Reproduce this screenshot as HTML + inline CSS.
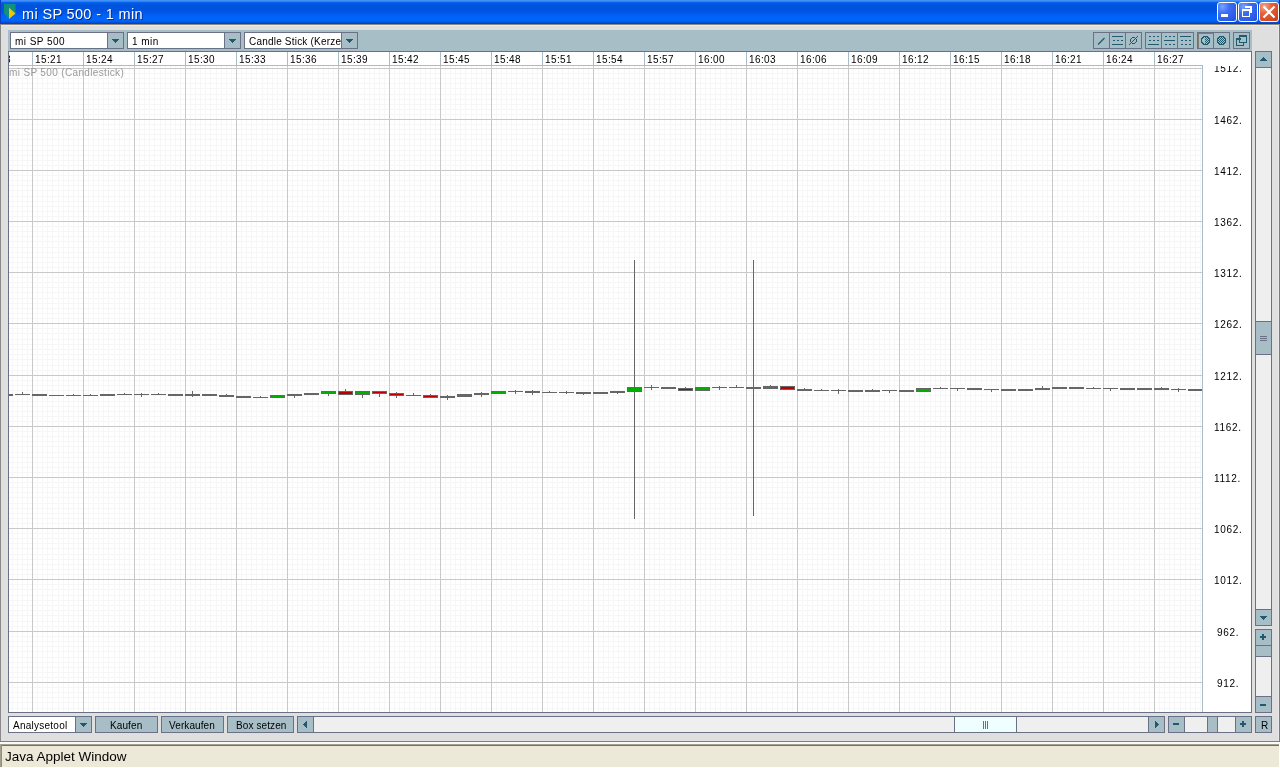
<!DOCTYPE html>
<html><head><meta charset="utf-8"><style>
html,body{margin:0;padding:0;}
body{width:1280px;height:768px;overflow:hidden;position:relative;background:#dfdfdf;font-family:"Liberation Sans",sans-serif;}
body div{position:absolute;}
.t{white-space:nowrap;line-height:0;height:0;}
.t span{display:inline-block;line-height:0;will-change:transform;}
</style></head><body>
<div style="left:0;top:0;width:1280px;height:24px;background:linear-gradient(to bottom,#3b8cf6 0px,#4c97fb 1px,#0d6af5 2px,#005ce6 3px,#0054db 5px,#0053e0 10px,#0058ea 13px,#0063f8 16px,#0066fb 20px,#005ae8 22px,#0044d0 23px,#0040c8 24px);"></div>
<div style="left:0px;top:0px;width:1px;height:24px;background:#0a3fc0;"></div>
<div style="left:1279px;top:0px;width:1px;height:24px;background:#0030b0;"></div>
<svg style="position:absolute;left:4px;top:4px;shape-rendering:auto" width="12" height="15" viewBox="0 0 12 15" shape-rendering="crispEdges"><path d="M0 0H11.5V9.5L5 14.5L0 9.5Z" fill="#14917a"/><path d="M5 3.8L11.5 9.5L5 15Z" fill="#f5c400"/></svg>
<div class="t" style="left:22px;top:14px;font-size:14.5px;color:#fff;letter-spacing:0.35px;text-shadow:1px 1px 0 #0a2a90;"><span>mi SP 500 - 1 min</span></div>
<div style="left:1217px;top:2px;width:20px;height:20px;box-sizing:border-box;border:1px solid #fff;border-radius:3px;background:radial-gradient(circle at 25% 20%,#7aa2ff 0,#3d6cf3 35%,#1f4fe0 100%);"></div>
<svg style="position:absolute;left:1217px;top:2px;" width="20" height="20" viewBox="0 0 20 20" shape-rendering="crispEdges"><rect x="4" y="12" width="7" height="3" fill="#fff"/></svg>
<div style="left:1238px;top:2px;width:20px;height:20px;box-sizing:border-box;border:1px solid #fff;border-radius:3px;background:radial-gradient(circle at 25% 20%,#7aa2ff 0,#3d6cf3 35%,#1f4fe0 100%);"></div>
<svg style="position:absolute;left:1238px;top:2px;" width="20" height="20" viewBox="0 0 20 20" shape-rendering="crispEdges"><rect x="7" y="4" width="7" height="2" fill="#fff"/><rect x="12" y="6" width="2" height="5" fill="#fff"/><rect x="4" y="7" width="8" height="8" fill="none" stroke="#fff" stroke-width="0"/><path d="M4 7h8v8h-8z M5 9h6v5h-6z" fill="#fff" fill-rule="evenodd"/></svg>
<div style="left:1259px;top:2px;width:20px;height:20px;box-sizing:border-box;border:1px solid #fff;border-radius:3px;background:radial-gradient(circle at 25% 20%,#f4a88c 0,#e4633c 35%,#c83a14 100%);"></div>
<svg style="position:absolute;left:1259px;top:2px;" width="20" height="20" viewBox="0 0 20 20" shape-rendering="crispEdges"><path d="M4.5 4.5L15.5 15.5M15.5 4.5L4.5 15.5" stroke="#fff" stroke-width="2.2" fill="none" shape-rendering="auto"/></svg>
<div style="left:0px;top:24px;width:1280px;height:1px;background:#8f8b7c;"></div>
<div style="left:0px;top:25px;width:1280px;height:1px;background:#ececec;"></div>
<div style="left:0px;top:25px;width:1px;height:716px;background:#8a8a8a;"></div>
<div style="left:1278px;top:25px;width:1px;height:716px;background:#e9e9e9;"></div>
<div style="left:1279px;top:25px;width:1px;height:716px;background:#7a7a7a;"></div>
<div style="left:0px;top:741px;width:1280px;height:1px;background:#7f7f7f;"></div>
<div style="left:8px;top:30px;width:1244px;height:21px;background:#a8bec6;"></div>
<div style="left:10px;top:32px;width:114px;height:17px;background:#fff;border:1px solid #6a7186;box-sizing:border-box;"></div>
<div style="left:107px;top:32px;width:17px;height:17px;background:#a8bec6;border:1px solid #6a7186;box-sizing:border-box;"></div>
<svg style="position:absolute;left:112px;top:39px;" width="7" height="4" viewBox="0 0 7 4" shape-rendering="crispEdges"><rect x="0" y="0" width="7" height="1" fill="#1f5a6e"/><rect x="1" y="1" width="5" height="1" fill="#1f5a6e"/><rect x="2" y="2" width="3" height="1" fill="#1f5a6e"/><rect x="3" y="3" width="1" height="1" fill="#1f5a6e"/></svg>
<div style="left:11px;top:33px;width:96px;height:15px;overflow:hidden;">
<div class="t" style="left:4px;top:9px;font-size:10px;letter-spacing:0.45px"><span>mi SP 500</span></div></div>
<div style="left:127px;top:32px;width:114px;height:17px;background:#fff;border:1px solid #6a7186;box-sizing:border-box;"></div>
<div style="left:224px;top:32px;width:17px;height:17px;background:#a8bec6;border:1px solid #6a7186;box-sizing:border-box;"></div>
<svg style="position:absolute;left:229px;top:39px;" width="7" height="4" viewBox="0 0 7 4" shape-rendering="crispEdges"><rect x="0" y="0" width="7" height="1" fill="#1f5a6e"/><rect x="1" y="1" width="5" height="1" fill="#1f5a6e"/><rect x="2" y="2" width="3" height="1" fill="#1f5a6e"/><rect x="3" y="3" width="1" height="1" fill="#1f5a6e"/></svg>
<div style="left:128px;top:33px;width:96px;height:15px;overflow:hidden;">
<div class="t" style="left:4px;top:9px;font-size:10px;letter-spacing:0.45px"><span>1 min</span></div></div>
<div style="left:244px;top:32px;width:114px;height:17px;background:#fff;border:1px solid #6a7186;box-sizing:border-box;"></div>
<div style="left:341px;top:32px;width:17px;height:17px;background:#a8bec6;border:1px solid #6a7186;box-sizing:border-box;"></div>
<svg style="position:absolute;left:346px;top:39px;" width="7" height="4" viewBox="0 0 7 4" shape-rendering="crispEdges"><rect x="0" y="0" width="7" height="1" fill="#1f5a6e"/><rect x="1" y="1" width="5" height="1" fill="#1f5a6e"/><rect x="2" y="2" width="3" height="1" fill="#1f5a6e"/><rect x="3" y="3" width="1" height="1" fill="#1f5a6e"/></svg>
<div style="left:245px;top:33px;width:96px;height:15px;overflow:hidden;">
<div class="t" style="left:4px;top:9px;font-size:10px;letter-spacing:0.2px"><span>Candle Stick (Kerze</span></div></div>
<div style="left:1093px;top:32px;width:17px;height:17px;background:#a8bec6;border:1px solid #6a7186;box-sizing:border-box;"></div>
<svg style="position:absolute;left:1093px;top:32px;" width="17" height="17" viewBox="0 0 17 17" shape-rendering="crispEdges"><path d="M5 12.5L11.5 6" stroke="#1f5a6e" stroke-width="1.3" shape-rendering="auto"/></svg>
<div style="left:1109px;top:32px;width:17px;height:17px;background:#a8bec6;border:1px solid #6a7186;box-sizing:border-box;"></div>
<svg style="position:absolute;left:1109px;top:32px;" width="17" height="17" viewBox="0 0 17 17" shape-rendering="crispEdges"><rect x="3" y="4" width="11" height="1" fill="#1f5a6e"/><rect x="4" y="8" width="2" height="1" fill="#1f5a6e"/><rect x="8" y="8" width="2" height="1" fill="#1f5a6e"/><rect x="12" y="8" width="2" height="1" fill="#1f5a6e"/><rect x="3" y="12" width="11" height="1" fill="#1f5a6e"/></svg>
<div style="left:1125px;top:32px;width:17px;height:17px;background:#a8bec6;border:1px solid #6a7186;box-sizing:border-box;"></div>
<svg style="position:absolute;left:1125px;top:32px;" width="17" height="17" viewBox="0 0 17 17" shape-rendering="crispEdges"><rect x="7" y="5" width="1" height="1" fill="#1f5a6e"/><rect x="8" y="5" width="1" height="1" fill="#1f5a6e"/><rect x="9" y="5" width="1" height="1" fill="#1f5a6e"/><rect x="7" y="11" width="1" height="1" fill="#1f5a6e"/><rect x="8" y="11" width="1" height="1" fill="#1f5a6e"/><rect x="9" y="11" width="1" height="1" fill="#1f5a6e"/><rect x="6" y="6" width="1" height="1" fill="#1f5a6e"/><rect x="10" y="6" width="1" height="1" fill="#1f5a6e"/><rect x="6" y="10" width="1" height="1" fill="#1f5a6e"/><rect x="10" y="10" width="1" height="1" fill="#1f5a6e"/><rect x="5" y="7" width="1" height="1" fill="#1f5a6e"/><rect x="5" y="8" width="1" height="1" fill="#1f5a6e"/><rect x="5" y="9" width="1" height="1" fill="#1f5a6e"/><rect x="11" y="7" width="1" height="1" fill="#1f5a6e"/><rect x="11" y="8" width="1" height="1" fill="#1f5a6e"/><rect x="11" y="9" width="1" height="1" fill="#1f5a6e"/><rect x="4" y="12" width="1" height="1" fill="#1f5a6e"/><rect x="5" y="11" width="1" height="1" fill="#1f5a6e"/><rect x="6" y="10" width="1" height="1" fill="#1f5a6e"/><rect x="7" y="9" width="1" height="1" fill="#1f5a6e"/><rect x="8" y="8" width="1" height="1" fill="#1f5a6e"/><rect x="9" y="7" width="1" height="1" fill="#1f5a6e"/><rect x="10" y="6" width="1" height="1" fill="#1f5a6e"/><rect x="11" y="5" width="1" height="1" fill="#1f5a6e"/><rect x="12" y="4" width="1" height="1" fill="#1f5a6e"/></svg>
<div style="left:1145px;top:32px;width:17px;height:17px;background:#a8bec6;border:1px solid #6a7186;box-sizing:border-box;"></div>
<svg style="position:absolute;left:1145px;top:32px;" width="17" height="17" viewBox="0 0 17 17" shape-rendering="crispEdges"><rect x="4" y="4" width="2" height="1" fill="#1f5a6e"/><rect x="8" y="4" width="2" height="1" fill="#1f5a6e"/><rect x="12" y="4" width="2" height="1" fill="#1f5a6e"/><rect x="4" y="8" width="2" height="1" fill="#1f5a6e"/><rect x="8" y="8" width="2" height="1" fill="#1f5a6e"/><rect x="12" y="8" width="2" height="1" fill="#1f5a6e"/><rect x="3" y="12" width="11" height="1" fill="#1f5a6e"/></svg>
<div style="left:1161px;top:32px;width:17px;height:17px;background:#a8bec6;border:1px solid #6a7186;box-sizing:border-box;"></div>
<svg style="position:absolute;left:1161px;top:32px;" width="17" height="17" viewBox="0 0 17 17" shape-rendering="crispEdges"><rect x="4" y="4" width="2" height="1" fill="#1f5a6e"/><rect x="8" y="4" width="2" height="1" fill="#1f5a6e"/><rect x="12" y="4" width="2" height="1" fill="#1f5a6e"/><rect x="3" y="8" width="11" height="1" fill="#1f5a6e"/><rect x="4" y="12" width="2" height="1" fill="#1f5a6e"/><rect x="8" y="12" width="2" height="1" fill="#1f5a6e"/><rect x="12" y="12" width="2" height="1" fill="#1f5a6e"/></svg>
<div style="left:1177px;top:32px;width:17px;height:17px;background:#a8bec6;border:1px solid #6a7186;box-sizing:border-box;"></div>
<svg style="position:absolute;left:1177px;top:32px;" width="17" height="17" viewBox="0 0 17 17" shape-rendering="crispEdges"><rect x="3" y="4" width="11" height="1" fill="#1f5a6e"/><rect x="4" y="8" width="2" height="1" fill="#1f5a6e"/><rect x="8" y="8" width="2" height="1" fill="#1f5a6e"/><rect x="12" y="8" width="2" height="1" fill="#1f5a6e"/><rect x="4" y="12" width="2" height="1" fill="#1f5a6e"/><rect x="8" y="12" width="2" height="1" fill="#1f5a6e"/><rect x="12" y="12" width="2" height="1" fill="#1f5a6e"/></svg>
<div style="left:1197px;top:32px;width:17px;height:17px;background:#a8bec6;border:1px solid #6a7186;box-sizing:border-box;"></div>
<div style="left:1198px;top:33px;width:15px;height:1px;background:#807c70;"></div>
<div style="left:1198px;top:33px;width:1px;height:15px;background:#807c70;"></div>
<svg style="position:absolute;left:1197px;top:32px;" width="17" height="17" viewBox="0 0 17 17" shape-rendering="crispEdges"><rect x="6" y="4" width="5" height="1" fill="#1f5a6e"/><rect x="5" y="5" width="2" height="1" fill="#1f5a6e"/><rect x="10" y="5" width="2" height="1" fill="#1f5a6e"/><rect x="4" y="6" width="2" height="1" fill="#1f5a6e"/><rect x="11" y="6" width="2" height="1" fill="#1f5a6e"/><rect x="4" y="7" width="1" height="1" fill="#1f5a6e"/><rect x="12" y="7" width="1" height="1" fill="#1f5a6e"/><rect x="4" y="8" width="1" height="1" fill="#1f5a6e"/><rect x="12" y="8" width="1" height="1" fill="#1f5a6e"/><rect x="4" y="9" width="1" height="1" fill="#1f5a6e"/><rect x="12" y="9" width="1" height="1" fill="#1f5a6e"/><rect x="4" y="10" width="2" height="1" fill="#1f5a6e"/><rect x="11" y="10" width="2" height="1" fill="#1f5a6e"/><rect x="5" y="11" width="2" height="1" fill="#1f5a6e"/><rect x="10" y="11" width="2" height="1" fill="#1f5a6e"/><rect x="6" y="12" width="5" height="1" fill="#1f5a6e"/><rect x="8" y="5" width="1" height="1" fill="#1f5a6e"/><rect x="9" y="6" width="1" height="1" fill="#1f5a6e"/><rect x="8" y="7" width="1" height="1" fill="#1f5a6e"/><rect x="10" y="7" width="1" height="1" fill="#1f5a6e"/><rect x="9" y="8" width="1" height="1" fill="#1f5a6e"/><rect x="11" y="8" width="1" height="1" fill="#1f5a6e"/><rect x="8" y="9" width="1" height="1" fill="#1f5a6e"/><rect x="10" y="9" width="1" height="1" fill="#1f5a6e"/><rect x="9" y="10" width="1" height="1" fill="#1f5a6e"/><rect x="8" y="11" width="1" height="1" fill="#1f5a6e"/></svg>
<div style="left:1213px;top:32px;width:17px;height:17px;background:#a8bec6;border:1px solid #6a7186;box-sizing:border-box;"></div>
<svg style="position:absolute;left:1213px;top:32px;" width="17" height="17" viewBox="0 0 17 17" shape-rendering="crispEdges"><rect x="6" y="4" width="5" height="1" fill="#1f5a6e"/><rect x="5" y="5" width="2" height="1" fill="#1f5a6e"/><rect x="10" y="5" width="2" height="1" fill="#1f5a6e"/><rect x="4" y="6" width="2" height="1" fill="#1f5a6e"/><rect x="11" y="6" width="2" height="1" fill="#1f5a6e"/><rect x="4" y="7" width="1" height="1" fill="#1f5a6e"/><rect x="12" y="7" width="1" height="1" fill="#1f5a6e"/><rect x="4" y="8" width="1" height="1" fill="#1f5a6e"/><rect x="12" y="8" width="1" height="1" fill="#1f5a6e"/><rect x="4" y="9" width="1" height="1" fill="#1f5a6e"/><rect x="12" y="9" width="1" height="1" fill="#1f5a6e"/><rect x="4" y="10" width="2" height="1" fill="#1f5a6e"/><rect x="11" y="10" width="2" height="1" fill="#1f5a6e"/><rect x="5" y="11" width="2" height="1" fill="#1f5a6e"/><rect x="10" y="11" width="2" height="1" fill="#1f5a6e"/><rect x="6" y="12" width="5" height="1" fill="#1f5a6e"/><rect x="8" y="5" width="1" height="1" fill="#1f5a6e"/><rect x="7" y="6" width="1" height="1" fill="#1f5a6e"/><rect x="9" y="6" width="1" height="1" fill="#1f5a6e"/><rect x="6" y="7" width="1" height="1" fill="#1f5a6e"/><rect x="8" y="7" width="1" height="1" fill="#1f5a6e"/><rect x="10" y="7" width="1" height="1" fill="#1f5a6e"/><rect x="5" y="8" width="1" height="1" fill="#1f5a6e"/><rect x="7" y="8" width="1" height="1" fill="#1f5a6e"/><rect x="9" y="8" width="1" height="1" fill="#1f5a6e"/><rect x="11" y="8" width="1" height="1" fill="#1f5a6e"/><rect x="6" y="9" width="1" height="1" fill="#1f5a6e"/><rect x="8" y="9" width="1" height="1" fill="#1f5a6e"/><rect x="10" y="9" width="1" height="1" fill="#1f5a6e"/><rect x="7" y="10" width="1" height="1" fill="#1f5a6e"/><rect x="9" y="10" width="1" height="1" fill="#1f5a6e"/><rect x="8" y="11" width="1" height="1" fill="#1f5a6e"/></svg>
<div style="left:1233px;top:32px;width:17px;height:17px;background:#a8bec6;border:1px solid #6a7186;box-sizing:border-box;"></div>
<svg style="position:absolute;left:1233px;top:32px;" width="17" height="17" viewBox="0 0 17 17" shape-rendering="crispEdges"><rect x="6" y="3" width="8" height="2" fill="#1f5a6e"/><rect x="6.5" y="3.5" width="7" height="7" fill="none" stroke="#1f5a6e" stroke-width="1"/><rect x="3" y="6" width="5" height="2" fill="#1f5a6e"/><path d="M3.5 6.5v7h7v-3" fill="none" stroke="#1f5a6e" stroke-width="1"/></svg>
<div style="left:8px;top:51px;width:1244px;height:662px;background:#fff;border:1px solid #6a7186;box-sizing:border-box;"></div>
<svg style="position:absolute;left:9px;top:66px;" width="1194" height="646" viewBox="0 0 1194 646" shape-rendering="crispEdges"><rect x="3" y="0" width="1" height="646" fill="#f6f6f6"/><rect x="8" y="0" width="1" height="646" fill="#f6f6f6"/><rect x="13" y="0" width="1" height="646" fill="#f6f6f6"/><rect x="18" y="0" width="1" height="646" fill="#f6f6f6"/><rect x="23" y="0" width="1" height="646" fill="#f6f6f6"/><rect x="28" y="0" width="1" height="646" fill="#f6f6f6"/><rect x="33" y="0" width="1" height="646" fill="#f6f6f6"/><rect x="38" y="0" width="1" height="646" fill="#f6f6f6"/><rect x="43" y="0" width="1" height="646" fill="#f6f6f6"/><rect x="49" y="0" width="1" height="646" fill="#f6f6f6"/><rect x="54" y="0" width="1" height="646" fill="#f6f6f6"/><rect x="59" y="0" width="1" height="646" fill="#f6f6f6"/><rect x="64" y="0" width="1" height="646" fill="#f6f6f6"/><rect x="69" y="0" width="1" height="646" fill="#f6f6f6"/><rect x="74" y="0" width="1" height="646" fill="#f6f6f6"/><rect x="79" y="0" width="1" height="646" fill="#f6f6f6"/><rect x="84" y="0" width="1" height="646" fill="#f6f6f6"/><rect x="89" y="0" width="1" height="646" fill="#f6f6f6"/><rect x="94" y="0" width="1" height="646" fill="#f6f6f6"/><rect x="99" y="0" width="1" height="646" fill="#f6f6f6"/><rect x="105" y="0" width="1" height="646" fill="#f6f6f6"/><rect x="110" y="0" width="1" height="646" fill="#f6f6f6"/><rect x="115" y="0" width="1" height="646" fill="#f6f6f6"/><rect x="120" y="0" width="1" height="646" fill="#f6f6f6"/><rect x="125" y="0" width="1" height="646" fill="#f6f6f6"/><rect x="130" y="0" width="1" height="646" fill="#f6f6f6"/><rect x="135" y="0" width="1" height="646" fill="#f6f6f6"/><rect x="140" y="0" width="1" height="646" fill="#f6f6f6"/><rect x="145" y="0" width="1" height="646" fill="#f6f6f6"/><rect x="151" y="0" width="1" height="646" fill="#f6f6f6"/><rect x="156" y="0" width="1" height="646" fill="#f6f6f6"/><rect x="161" y="0" width="1" height="646" fill="#f6f6f6"/><rect x="166" y="0" width="1" height="646" fill="#f6f6f6"/><rect x="171" y="0" width="1" height="646" fill="#f6f6f6"/><rect x="176" y="0" width="1" height="646" fill="#f6f6f6"/><rect x="181" y="0" width="1" height="646" fill="#f6f6f6"/><rect x="186" y="0" width="1" height="646" fill="#f6f6f6"/><rect x="191" y="0" width="1" height="646" fill="#f6f6f6"/><rect x="196" y="0" width="1" height="646" fill="#f6f6f6"/><rect x="201" y="0" width="1" height="646" fill="#f6f6f6"/><rect x="207" y="0" width="1" height="646" fill="#f6f6f6"/><rect x="212" y="0" width="1" height="646" fill="#f6f6f6"/><rect x="217" y="0" width="1" height="646" fill="#f6f6f6"/><rect x="222" y="0" width="1" height="646" fill="#f6f6f6"/><rect x="227" y="0" width="1" height="646" fill="#f6f6f6"/><rect x="232" y="0" width="1" height="646" fill="#f6f6f6"/><rect x="237" y="0" width="1" height="646" fill="#f6f6f6"/><rect x="242" y="0" width="1" height="646" fill="#f6f6f6"/><rect x="247" y="0" width="1" height="646" fill="#f6f6f6"/><rect x="253" y="0" width="1" height="646" fill="#f6f6f6"/><rect x="258" y="0" width="1" height="646" fill="#f6f6f6"/><rect x="263" y="0" width="1" height="646" fill="#f6f6f6"/><rect x="268" y="0" width="1" height="646" fill="#f6f6f6"/><rect x="273" y="0" width="1" height="646" fill="#f6f6f6"/><rect x="278" y="0" width="1" height="646" fill="#f6f6f6"/><rect x="283" y="0" width="1" height="646" fill="#f6f6f6"/><rect x="288" y="0" width="1" height="646" fill="#f6f6f6"/><rect x="293" y="0" width="1" height="646" fill="#f6f6f6"/><rect x="298" y="0" width="1" height="646" fill="#f6f6f6"/><rect x="303" y="0" width="1" height="646" fill="#f6f6f6"/><rect x="309" y="0" width="1" height="646" fill="#f6f6f6"/><rect x="314" y="0" width="1" height="646" fill="#f6f6f6"/><rect x="319" y="0" width="1" height="646" fill="#f6f6f6"/><rect x="324" y="0" width="1" height="646" fill="#f6f6f6"/><rect x="329" y="0" width="1" height="646" fill="#f6f6f6"/><rect x="334" y="0" width="1" height="646" fill="#f6f6f6"/><rect x="339" y="0" width="1" height="646" fill="#f6f6f6"/><rect x="344" y="0" width="1" height="646" fill="#f6f6f6"/><rect x="349" y="0" width="1" height="646" fill="#f6f6f6"/><rect x="355" y="0" width="1" height="646" fill="#f6f6f6"/><rect x="360" y="0" width="1" height="646" fill="#f6f6f6"/><rect x="365" y="0" width="1" height="646" fill="#f6f6f6"/><rect x="370" y="0" width="1" height="646" fill="#f6f6f6"/><rect x="375" y="0" width="1" height="646" fill="#f6f6f6"/><rect x="380" y="0" width="1" height="646" fill="#f6f6f6"/><rect x="385" y="0" width="1" height="646" fill="#f6f6f6"/><rect x="390" y="0" width="1" height="646" fill="#f6f6f6"/><rect x="395" y="0" width="1" height="646" fill="#f6f6f6"/><rect x="400" y="0" width="1" height="646" fill="#f6f6f6"/><rect x="405" y="0" width="1" height="646" fill="#f6f6f6"/><rect x="411" y="0" width="1" height="646" fill="#f6f6f6"/><rect x="416" y="0" width="1" height="646" fill="#f6f6f6"/><rect x="421" y="0" width="1" height="646" fill="#f6f6f6"/><rect x="426" y="0" width="1" height="646" fill="#f6f6f6"/><rect x="431" y="0" width="1" height="646" fill="#f6f6f6"/><rect x="436" y="0" width="1" height="646" fill="#f6f6f6"/><rect x="441" y="0" width="1" height="646" fill="#f6f6f6"/><rect x="446" y="0" width="1" height="646" fill="#f6f6f6"/><rect x="451" y="0" width="1" height="646" fill="#f6f6f6"/><rect x="456" y="0" width="1" height="646" fill="#f6f6f6"/><rect x="462" y="0" width="1" height="646" fill="#f6f6f6"/><rect x="467" y="0" width="1" height="646" fill="#f6f6f6"/><rect x="472" y="0" width="1" height="646" fill="#f6f6f6"/><rect x="477" y="0" width="1" height="646" fill="#f6f6f6"/><rect x="482" y="0" width="1" height="646" fill="#f6f6f6"/><rect x="487" y="0" width="1" height="646" fill="#f6f6f6"/><rect x="492" y="0" width="1" height="646" fill="#f6f6f6"/><rect x="497" y="0" width="1" height="646" fill="#f6f6f6"/><rect x="502" y="0" width="1" height="646" fill="#f6f6f6"/><rect x="507" y="0" width="1" height="646" fill="#f6f6f6"/><rect x="513" y="0" width="1" height="646" fill="#f6f6f6"/><rect x="518" y="0" width="1" height="646" fill="#f6f6f6"/><rect x="523" y="0" width="1" height="646" fill="#f6f6f6"/><rect x="528" y="0" width="1" height="646" fill="#f6f6f6"/><rect x="533" y="0" width="1" height="646" fill="#f6f6f6"/><rect x="538" y="0" width="1" height="646" fill="#f6f6f6"/><rect x="543" y="0" width="1" height="646" fill="#f6f6f6"/><rect x="548" y="0" width="1" height="646" fill="#f6f6f6"/><rect x="553" y="0" width="1" height="646" fill="#f6f6f6"/><rect x="559" y="0" width="1" height="646" fill="#f6f6f6"/><rect x="564" y="0" width="1" height="646" fill="#f6f6f6"/><rect x="569" y="0" width="1" height="646" fill="#f6f6f6"/><rect x="574" y="0" width="1" height="646" fill="#f6f6f6"/><rect x="579" y="0" width="1" height="646" fill="#f6f6f6"/><rect x="584" y="0" width="1" height="646" fill="#f6f6f6"/><rect x="589" y="0" width="1" height="646" fill="#f6f6f6"/><rect x="594" y="0" width="1" height="646" fill="#f6f6f6"/><rect x="599" y="0" width="1" height="646" fill="#f6f6f6"/><rect x="604" y="0" width="1" height="646" fill="#f6f6f6"/><rect x="609" y="0" width="1" height="646" fill="#f6f6f6"/><rect x="615" y="0" width="1" height="646" fill="#f6f6f6"/><rect x="620" y="0" width="1" height="646" fill="#f6f6f6"/><rect x="625" y="0" width="1" height="646" fill="#f6f6f6"/><rect x="630" y="0" width="1" height="646" fill="#f6f6f6"/><rect x="635" y="0" width="1" height="646" fill="#f6f6f6"/><rect x="640" y="0" width="1" height="646" fill="#f6f6f6"/><rect x="645" y="0" width="1" height="646" fill="#f6f6f6"/><rect x="650" y="0" width="1" height="646" fill="#f6f6f6"/><rect x="655" y="0" width="1" height="646" fill="#f6f6f6"/><rect x="661" y="0" width="1" height="646" fill="#f6f6f6"/><rect x="666" y="0" width="1" height="646" fill="#f6f6f6"/><rect x="671" y="0" width="1" height="646" fill="#f6f6f6"/><rect x="676" y="0" width="1" height="646" fill="#f6f6f6"/><rect x="681" y="0" width="1" height="646" fill="#f6f6f6"/><rect x="686" y="0" width="1" height="646" fill="#f6f6f6"/><rect x="691" y="0" width="1" height="646" fill="#f6f6f6"/><rect x="696" y="0" width="1" height="646" fill="#f6f6f6"/><rect x="701" y="0" width="1" height="646" fill="#f6f6f6"/><rect x="706" y="0" width="1" height="646" fill="#f6f6f6"/><rect x="711" y="0" width="1" height="646" fill="#f6f6f6"/><rect x="717" y="0" width="1" height="646" fill="#f6f6f6"/><rect x="722" y="0" width="1" height="646" fill="#f6f6f6"/><rect x="727" y="0" width="1" height="646" fill="#f6f6f6"/><rect x="732" y="0" width="1" height="646" fill="#f6f6f6"/><rect x="737" y="0" width="1" height="646" fill="#f6f6f6"/><rect x="742" y="0" width="1" height="646" fill="#f6f6f6"/><rect x="747" y="0" width="1" height="646" fill="#f6f6f6"/><rect x="752" y="0" width="1" height="646" fill="#f6f6f6"/><rect x="757" y="0" width="1" height="646" fill="#f6f6f6"/><rect x="763" y="0" width="1" height="646" fill="#f6f6f6"/><rect x="768" y="0" width="1" height="646" fill="#f6f6f6"/><rect x="773" y="0" width="1" height="646" fill="#f6f6f6"/><rect x="778" y="0" width="1" height="646" fill="#f6f6f6"/><rect x="783" y="0" width="1" height="646" fill="#f6f6f6"/><rect x="788" y="0" width="1" height="646" fill="#f6f6f6"/><rect x="793" y="0" width="1" height="646" fill="#f6f6f6"/><rect x="798" y="0" width="1" height="646" fill="#f6f6f6"/><rect x="803" y="0" width="1" height="646" fill="#f6f6f6"/><rect x="808" y="0" width="1" height="646" fill="#f6f6f6"/><rect x="813" y="0" width="1" height="646" fill="#f6f6f6"/><rect x="819" y="0" width="1" height="646" fill="#f6f6f6"/><rect x="824" y="0" width="1" height="646" fill="#f6f6f6"/><rect x="829" y="0" width="1" height="646" fill="#f6f6f6"/><rect x="834" y="0" width="1" height="646" fill="#f6f6f6"/><rect x="839" y="0" width="1" height="646" fill="#f6f6f6"/><rect x="844" y="0" width="1" height="646" fill="#f6f6f6"/><rect x="849" y="0" width="1" height="646" fill="#f6f6f6"/><rect x="854" y="0" width="1" height="646" fill="#f6f6f6"/><rect x="859" y="0" width="1" height="646" fill="#f6f6f6"/><rect x="864" y="0" width="1" height="646" fill="#f6f6f6"/><rect x="870" y="0" width="1" height="646" fill="#f6f6f6"/><rect x="875" y="0" width="1" height="646" fill="#f6f6f6"/><rect x="880" y="0" width="1" height="646" fill="#f6f6f6"/><rect x="885" y="0" width="1" height="646" fill="#f6f6f6"/><rect x="890" y="0" width="1" height="646" fill="#f6f6f6"/><rect x="895" y="0" width="1" height="646" fill="#f6f6f6"/><rect x="900" y="0" width="1" height="646" fill="#f6f6f6"/><rect x="905" y="0" width="1" height="646" fill="#f6f6f6"/><rect x="910" y="0" width="1" height="646" fill="#f6f6f6"/><rect x="915" y="0" width="1" height="646" fill="#f6f6f6"/><rect x="921" y="0" width="1" height="646" fill="#f6f6f6"/><rect x="926" y="0" width="1" height="646" fill="#f6f6f6"/><rect x="931" y="0" width="1" height="646" fill="#f6f6f6"/><rect x="936" y="0" width="1" height="646" fill="#f6f6f6"/><rect x="941" y="0" width="1" height="646" fill="#f6f6f6"/><rect x="946" y="0" width="1" height="646" fill="#f6f6f6"/><rect x="951" y="0" width="1" height="646" fill="#f6f6f6"/><rect x="956" y="0" width="1" height="646" fill="#f6f6f6"/><rect x="961" y="0" width="1" height="646" fill="#f6f6f6"/><rect x="966" y="0" width="1" height="646" fill="#f6f6f6"/><rect x="972" y="0" width="1" height="646" fill="#f6f6f6"/><rect x="977" y="0" width="1" height="646" fill="#f6f6f6"/><rect x="982" y="0" width="1" height="646" fill="#f6f6f6"/><rect x="987" y="0" width="1" height="646" fill="#f6f6f6"/><rect x="992" y="0" width="1" height="646" fill="#f6f6f6"/><rect x="997" y="0" width="1" height="646" fill="#f6f6f6"/><rect x="1002" y="0" width="1" height="646" fill="#f6f6f6"/><rect x="1007" y="0" width="1" height="646" fill="#f6f6f6"/><rect x="1012" y="0" width="1" height="646" fill="#f6f6f6"/><rect x="1017" y="0" width="1" height="646" fill="#f6f6f6"/><rect x="1023" y="0" width="1" height="646" fill="#f6f6f6"/><rect x="1028" y="0" width="1" height="646" fill="#f6f6f6"/><rect x="1033" y="0" width="1" height="646" fill="#f6f6f6"/><rect x="1038" y="0" width="1" height="646" fill="#f6f6f6"/><rect x="1043" y="0" width="1" height="646" fill="#f6f6f6"/><rect x="1048" y="0" width="1" height="646" fill="#f6f6f6"/><rect x="1053" y="0" width="1" height="646" fill="#f6f6f6"/><rect x="1058" y="0" width="1" height="646" fill="#f6f6f6"/><rect x="1063" y="0" width="1" height="646" fill="#f6f6f6"/><rect x="1069" y="0" width="1" height="646" fill="#f6f6f6"/><rect x="1074" y="0" width="1" height="646" fill="#f6f6f6"/><rect x="1079" y="0" width="1" height="646" fill="#f6f6f6"/><rect x="1084" y="0" width="1" height="646" fill="#f6f6f6"/><rect x="1089" y="0" width="1" height="646" fill="#f6f6f6"/><rect x="1094" y="0" width="1" height="646" fill="#f6f6f6"/><rect x="1099" y="0" width="1" height="646" fill="#f6f6f6"/><rect x="1104" y="0" width="1" height="646" fill="#f6f6f6"/><rect x="1109" y="0" width="1" height="646" fill="#f6f6f6"/><rect x="1114" y="0" width="1" height="646" fill="#f6f6f6"/><rect x="1119" y="0" width="1" height="646" fill="#f6f6f6"/><rect x="1125" y="0" width="1" height="646" fill="#f6f6f6"/><rect x="1130" y="0" width="1" height="646" fill="#f6f6f6"/><rect x="1135" y="0" width="1" height="646" fill="#f6f6f6"/><rect x="1140" y="0" width="1" height="646" fill="#f6f6f6"/><rect x="1145" y="0" width="1" height="646" fill="#f6f6f6"/><rect x="1150" y="0" width="1" height="646" fill="#f6f6f6"/><rect x="1155" y="0" width="1" height="646" fill="#f6f6f6"/><rect x="1160" y="0" width="1" height="646" fill="#f6f6f6"/><rect x="1165" y="0" width="1" height="646" fill="#f6f6f6"/><rect x="1171" y="0" width="1" height="646" fill="#f6f6f6"/><rect x="1176" y="0" width="1" height="646" fill="#f6f6f6"/><rect x="1181" y="0" width="1" height="646" fill="#f6f6f6"/><rect x="1186" y="0" width="1" height="646" fill="#f6f6f6"/><rect x="1191" y="0" width="1" height="646" fill="#f6f6f6"/><rect x="0" y="2" width="1193" height="1" fill="#f6f6f6"/><rect x="0" y="7" width="1193" height="1" fill="#f6f6f6"/><rect x="0" y="12" width="1193" height="1" fill="#f6f6f6"/><rect x="0" y="17" width="1193" height="1" fill="#f6f6f6"/><rect x="0" y="22" width="1193" height="1" fill="#f6f6f6"/><rect x="0" y="28" width="1193" height="1" fill="#f6f6f6"/><rect x="0" y="33" width="1193" height="1" fill="#f6f6f6"/><rect x="0" y="38" width="1193" height="1" fill="#f6f6f6"/><rect x="0" y="43" width="1193" height="1" fill="#f6f6f6"/><rect x="0" y="48" width="1193" height="1" fill="#f6f6f6"/><rect x="0" y="53" width="1193" height="1" fill="#f6f6f6"/><rect x="0" y="58" width="1193" height="1" fill="#f6f6f6"/><rect x="0" y="63" width="1193" height="1" fill="#f6f6f6"/><rect x="0" y="68" width="1193" height="1" fill="#f6f6f6"/><rect x="0" y="73" width="1193" height="1" fill="#f6f6f6"/><rect x="0" y="79" width="1193" height="1" fill="#f6f6f6"/><rect x="0" y="84" width="1193" height="1" fill="#f6f6f6"/><rect x="0" y="89" width="1193" height="1" fill="#f6f6f6"/><rect x="0" y="94" width="1193" height="1" fill="#f6f6f6"/><rect x="0" y="99" width="1193" height="1" fill="#f6f6f6"/><rect x="0" y="104" width="1193" height="1" fill="#f6f6f6"/><rect x="0" y="109" width="1193" height="1" fill="#f6f6f6"/><rect x="0" y="114" width="1193" height="1" fill="#f6f6f6"/><rect x="0" y="119" width="1193" height="1" fill="#f6f6f6"/><rect x="0" y="124" width="1193" height="1" fill="#f6f6f6"/><rect x="0" y="130" width="1193" height="1" fill="#f6f6f6"/><rect x="0" y="135" width="1193" height="1" fill="#f6f6f6"/><rect x="0" y="140" width="1193" height="1" fill="#f6f6f6"/><rect x="0" y="145" width="1193" height="1" fill="#f6f6f6"/><rect x="0" y="150" width="1193" height="1" fill="#f6f6f6"/><rect x="0" y="155" width="1193" height="1" fill="#f6f6f6"/><rect x="0" y="160" width="1193" height="1" fill="#f6f6f6"/><rect x="0" y="165" width="1193" height="1" fill="#f6f6f6"/><rect x="0" y="170" width="1193" height="1" fill="#f6f6f6"/><rect x="0" y="175" width="1193" height="1" fill="#f6f6f6"/><rect x="0" y="181" width="1193" height="1" fill="#f6f6f6"/><rect x="0" y="186" width="1193" height="1" fill="#f6f6f6"/><rect x="0" y="191" width="1193" height="1" fill="#f6f6f6"/><rect x="0" y="196" width="1193" height="1" fill="#f6f6f6"/><rect x="0" y="201" width="1193" height="1" fill="#f6f6f6"/><rect x="0" y="206" width="1193" height="1" fill="#f6f6f6"/><rect x="0" y="211" width="1193" height="1" fill="#f6f6f6"/><rect x="0" y="216" width="1193" height="1" fill="#f6f6f6"/><rect x="0" y="221" width="1193" height="1" fill="#f6f6f6"/><rect x="0" y="226" width="1193" height="1" fill="#f6f6f6"/><rect x="0" y="232" width="1193" height="1" fill="#f6f6f6"/><rect x="0" y="237" width="1193" height="1" fill="#f6f6f6"/><rect x="0" y="242" width="1193" height="1" fill="#f6f6f6"/><rect x="0" y="247" width="1193" height="1" fill="#f6f6f6"/><rect x="0" y="252" width="1193" height="1" fill="#f6f6f6"/><rect x="0" y="257" width="1193" height="1" fill="#f6f6f6"/><rect x="0" y="262" width="1193" height="1" fill="#f6f6f6"/><rect x="0" y="267" width="1193" height="1" fill="#f6f6f6"/><rect x="0" y="273" width="1193" height="1" fill="#f6f6f6"/><rect x="0" y="278" width="1193" height="1" fill="#f6f6f6"/><rect x="0" y="283" width="1193" height="1" fill="#f6f6f6"/><rect x="0" y="288" width="1193" height="1" fill="#f6f6f6"/><rect x="0" y="293" width="1193" height="1" fill="#f6f6f6"/><rect x="0" y="299" width="1193" height="1" fill="#f6f6f6"/><rect x="0" y="304" width="1193" height="1" fill="#f6f6f6"/><rect x="0" y="309" width="1193" height="1" fill="#f6f6f6"/><rect x="0" y="314" width="1193" height="1" fill="#f6f6f6"/><rect x="0" y="319" width="1193" height="1" fill="#f6f6f6"/><rect x="0" y="324" width="1193" height="1" fill="#f6f6f6"/><rect x="0" y="329" width="1193" height="1" fill="#f6f6f6"/><rect x="0" y="335" width="1193" height="1" fill="#f6f6f6"/><rect x="0" y="340" width="1193" height="1" fill="#f6f6f6"/><rect x="0" y="345" width="1193" height="1" fill="#f6f6f6"/><rect x="0" y="350" width="1193" height="1" fill="#f6f6f6"/><rect x="0" y="355" width="1193" height="1" fill="#f6f6f6"/><rect x="0" y="360" width="1193" height="1" fill="#f6f6f6"/><rect x="0" y="365" width="1193" height="1" fill="#f6f6f6"/><rect x="0" y="370" width="1193" height="1" fill="#f6f6f6"/><rect x="0" y="375" width="1193" height="1" fill="#f6f6f6"/><rect x="0" y="380" width="1193" height="1" fill="#f6f6f6"/><rect x="0" y="386" width="1193" height="1" fill="#f6f6f6"/><rect x="0" y="391" width="1193" height="1" fill="#f6f6f6"/><rect x="0" y="396" width="1193" height="1" fill="#f6f6f6"/><rect x="0" y="401" width="1193" height="1" fill="#f6f6f6"/><rect x="0" y="406" width="1193" height="1" fill="#f6f6f6"/><rect x="0" y="411" width="1193" height="1" fill="#f6f6f6"/><rect x="0" y="416" width="1193" height="1" fill="#f6f6f6"/><rect x="0" y="421" width="1193" height="1" fill="#f6f6f6"/><rect x="0" y="426" width="1193" height="1" fill="#f6f6f6"/><rect x="0" y="431" width="1193" height="1" fill="#f6f6f6"/><rect x="0" y="437" width="1193" height="1" fill="#f6f6f6"/><rect x="0" y="442" width="1193" height="1" fill="#f6f6f6"/><rect x="0" y="447" width="1193" height="1" fill="#f6f6f6"/><rect x="0" y="452" width="1193" height="1" fill="#f6f6f6"/><rect x="0" y="457" width="1193" height="1" fill="#f6f6f6"/><rect x="0" y="462" width="1193" height="1" fill="#f6f6f6"/><rect x="0" y="467" width="1193" height="1" fill="#f6f6f6"/><rect x="0" y="472" width="1193" height="1" fill="#f6f6f6"/><rect x="0" y="477" width="1193" height="1" fill="#f6f6f6"/><rect x="0" y="482" width="1193" height="1" fill="#f6f6f6"/><rect x="0" y="488" width="1193" height="1" fill="#f6f6f6"/><rect x="0" y="493" width="1193" height="1" fill="#f6f6f6"/><rect x="0" y="498" width="1193" height="1" fill="#f6f6f6"/><rect x="0" y="503" width="1193" height="1" fill="#f6f6f6"/><rect x="0" y="508" width="1193" height="1" fill="#f6f6f6"/><rect x="0" y="513" width="1193" height="1" fill="#f6f6f6"/><rect x="0" y="518" width="1193" height="1" fill="#f6f6f6"/><rect x="0" y="523" width="1193" height="1" fill="#f6f6f6"/><rect x="0" y="529" width="1193" height="1" fill="#f6f6f6"/><rect x="0" y="534" width="1193" height="1" fill="#f6f6f6"/><rect x="0" y="539" width="1193" height="1" fill="#f6f6f6"/><rect x="0" y="544" width="1193" height="1" fill="#f6f6f6"/><rect x="0" y="549" width="1193" height="1" fill="#f6f6f6"/><rect x="0" y="555" width="1193" height="1" fill="#f6f6f6"/><rect x="0" y="560" width="1193" height="1" fill="#f6f6f6"/><rect x="0" y="565" width="1193" height="1" fill="#f6f6f6"/><rect x="0" y="570" width="1193" height="1" fill="#f6f6f6"/><rect x="0" y="575" width="1193" height="1" fill="#f6f6f6"/><rect x="0" y="580" width="1193" height="1" fill="#f6f6f6"/><rect x="0" y="585" width="1193" height="1" fill="#f6f6f6"/><rect x="0" y="591" width="1193" height="1" fill="#f6f6f6"/><rect x="0" y="596" width="1193" height="1" fill="#f6f6f6"/><rect x="0" y="601" width="1193" height="1" fill="#f6f6f6"/><rect x="0" y="606" width="1193" height="1" fill="#f6f6f6"/><rect x="0" y="611" width="1193" height="1" fill="#f6f6f6"/><rect x="0" y="616" width="1193" height="1" fill="#f6f6f6"/><rect x="0" y="621" width="1193" height="1" fill="#f6f6f6"/><rect x="0" y="626" width="1193" height="1" fill="#f6f6f6"/><rect x="0" y="631" width="1193" height="1" fill="#f6f6f6"/><rect x="0" y="636" width="1193" height="1" fill="#f6f6f6"/><rect x="0" y="642" width="1193" height="1" fill="#f6f6f6"/><rect x="23" y="0" width="1" height="646" fill="#c9c9c9"/><rect x="74" y="0" width="1" height="646" fill="#c9c9c9"/><rect x="125" y="0" width="1" height="646" fill="#c9c9c9"/><rect x="176" y="0" width="1" height="646" fill="#c9c9c9"/><rect x="227" y="0" width="1" height="646" fill="#c9c9c9"/><rect x="278" y="0" width="1" height="646" fill="#c9c9c9"/><rect x="329" y="0" width="1" height="646" fill="#c9c9c9"/><rect x="380" y="0" width="1" height="646" fill="#c9c9c9"/><rect x="431" y="0" width="1" height="646" fill="#c9c9c9"/><rect x="482" y="0" width="1" height="646" fill="#c9c9c9"/><rect x="533" y="0" width="1" height="646" fill="#c9c9c9"/><rect x="584" y="0" width="1" height="646" fill="#c9c9c9"/><rect x="635" y="0" width="1" height="646" fill="#c9c9c9"/><rect x="686" y="0" width="1" height="646" fill="#c9c9c9"/><rect x="737" y="0" width="1" height="646" fill="#c9c9c9"/><rect x="788" y="0" width="1" height="646" fill="#c9c9c9"/><rect x="839" y="0" width="1" height="646" fill="#c9c9c9"/><rect x="890" y="0" width="1" height="646" fill="#c9c9c9"/><rect x="941" y="0" width="1" height="646" fill="#c9c9c9"/><rect x="992" y="0" width="1" height="646" fill="#c9c9c9"/><rect x="1043" y="0" width="1" height="646" fill="#c9c9c9"/><rect x="1094" y="0" width="1" height="646" fill="#c9c9c9"/><rect x="1145" y="0" width="1" height="646" fill="#c9c9c9"/><rect x="0" y="2" width="1193" height="1" fill="#c9c9c9"/><rect x="0" y="53" width="1193" height="1" fill="#c9c9c9"/><rect x="0" y="104" width="1193" height="1" fill="#c9c9c9"/><rect x="0" y="155" width="1193" height="1" fill="#c9c9c9"/><rect x="0" y="206" width="1193" height="1" fill="#c9c9c9"/><rect x="0" y="257" width="1193" height="1" fill="#c9c9c9"/><rect x="0" y="309" width="1193" height="1" fill="#c9c9c9"/><rect x="0" y="360" width="1193" height="1" fill="#c9c9c9"/><rect x="0" y="411" width="1193" height="1" fill="#c9c9c9"/><rect x="0" y="462" width="1193" height="1" fill="#c9c9c9"/><rect x="0" y="513" width="1193" height="1" fill="#c9c9c9"/><rect x="0" y="565" width="1193" height="1" fill="#c9c9c9"/><rect x="0" y="616" width="1193" height="1" fill="#c9c9c9"/><rect x="1193" y="0" width="1" height="646" fill="#a8bdc8"/><rect x="0" y="328" width="4" height="2" fill="#666666"/><rect x="13" y="326" width="1" height="2" fill="#666666"/><rect x="6" y="328" width="15" height="1" fill="#666666"/><rect x="23" y="328" width="15" height="2" fill="#666666"/><rect x="40" y="329" width="15" height="1" fill="#666666"/><rect x="64" y="328" width="1" height="1" fill="#666666"/><rect x="57" y="329" width="15" height="1" fill="#666666"/><rect x="81" y="328" width="1" height="1" fill="#666666"/><rect x="74" y="329" width="15" height="1" fill="#666666"/><rect x="91" y="328" width="15" height="2" fill="#666666"/><rect x="115" y="327" width="1" height="1" fill="#666666"/><rect x="108" y="328" width="15" height="1" fill="#666666"/><rect x="132" y="327" width="1" height="1" fill="#666666"/><rect x="132" y="329" width="1" height="2" fill="#666666"/><rect x="125" y="328" width="15" height="1" fill="#666666"/><rect x="149" y="327" width="1" height="1" fill="#666666"/><rect x="142" y="328" width="15" height="1" fill="#666666"/><rect x="159" y="328" width="15" height="2" fill="#666666"/><rect x="183" y="325" width="1" height="3" fill="#666666"/><rect x="183" y="330" width="1" height="1" fill="#666666"/><rect x="176" y="328" width="15" height="2" fill="#666666"/><rect x="193" y="328" width="15" height="2" fill="#666666"/><rect x="217" y="328" width="1" height="1" fill="#666666"/><rect x="210" y="329" width="15" height="2" fill="#666666"/><rect x="227" y="330" width="15" height="2" fill="#666666"/><rect x="251" y="330" width="1" height="1" fill="#666666"/><rect x="244" y="331" width="15" height="1" fill="#666666"/><rect x="261" y="329" width="15" height="3" fill="#666666"/><rect x="262" y="330" width="13" height="1" fill="#00b000"/><rect x="285" y="330" width="1" height="2" fill="#666666"/><rect x="278" y="328" width="15" height="2" fill="#666666"/><rect x="295" y="327" width="15" height="2" fill="#666666"/><rect x="319" y="328" width="1" height="2" fill="#666666"/><rect x="312" y="325" width="15" height="3" fill="#666666"/><rect x="313" y="326" width="13" height="1" fill="#00b000"/><rect x="336" y="323" width="1" height="2" fill="#666666"/><rect x="329" y="325" width="15" height="4" fill="#666666"/><rect x="330" y="326" width="13" height="2" fill="#b80000"/><rect x="353" y="329" width="1" height="3" fill="#666666"/><rect x="346" y="325" width="15" height="4" fill="#666666"/><rect x="347" y="326" width="13" height="2" fill="#00b000"/><rect x="370" y="328" width="1" height="3" fill="#666666"/><rect x="363" y="325" width="15" height="3" fill="#666666"/><rect x="364" y="326" width="13" height="1" fill="#b80000"/><rect x="387" y="326" width="1" height="1" fill="#666666"/><rect x="387" y="330" width="1" height="2" fill="#666666"/><rect x="380" y="327" width="15" height="3" fill="#666666"/><rect x="381" y="328" width="13" height="1" fill="#b80000"/><rect x="404" y="327" width="1" height="2" fill="#666666"/><rect x="397" y="329" width="15" height="1" fill="#666666"/><rect x="421" y="328" width="1" height="1" fill="#666666"/><rect x="414" y="329" width="15" height="3" fill="#666666"/><rect x="415" y="330" width="13" height="1" fill="#b80000"/><rect x="438" y="329" width="1" height="1" fill="#666666"/><rect x="438" y="332" width="1" height="2" fill="#666666"/><rect x="431" y="330" width="15" height="2" fill="#666666"/><rect x="448" y="328" width="15" height="3" fill="#666666"/><rect x="449" y="329" width="13" height="1" fill="#00b000"/><rect x="472" y="326" width="1" height="1" fill="#666666"/><rect x="472" y="329" width="1" height="2" fill="#666666"/><rect x="465" y="327" width="15" height="2" fill="#666666"/><rect x="482" y="325" width="15" height="3" fill="#666666"/><rect x="483" y="326" width="13" height="1" fill="#00b000"/><rect x="506" y="324" width="1" height="1" fill="#666666"/><rect x="506" y="326" width="1" height="2" fill="#666666"/><rect x="499" y="325" width="15" height="1" fill="#666666"/><rect x="523" y="324" width="1" height="1" fill="#666666"/><rect x="523" y="327" width="1" height="2" fill="#666666"/><rect x="516" y="325" width="15" height="2" fill="#666666"/><rect x="540" y="325" width="1" height="1" fill="#666666"/><rect x="533" y="326" width="15" height="1" fill="#666666"/><rect x="557" y="325" width="1" height="1" fill="#666666"/><rect x="557" y="327" width="1" height="1" fill="#666666"/><rect x="550" y="326" width="15" height="1" fill="#666666"/><rect x="574" y="328" width="1" height="1" fill="#666666"/><rect x="567" y="326" width="15" height="2" fill="#666666"/><rect x="584" y="326" width="15" height="2" fill="#666666"/><rect x="608" y="327" width="1" height="1" fill="#666666"/><rect x="601" y="325" width="15" height="2" fill="#666666"/><rect x="625" y="194" width="1" height="127" fill="#666666"/><rect x="625" y="326" width="1" height="127" fill="#666666"/><rect x="618" y="321" width="15" height="5" fill="#666666"/><rect x="619" y="322" width="13" height="3" fill="#00b000"/><rect x="642" y="319" width="1" height="2" fill="#666666"/><rect x="642" y="322" width="1" height="2" fill="#666666"/><rect x="635" y="321" width="15" height="1" fill="#666666"/><rect x="652" y="321" width="15" height="2" fill="#666666"/><rect x="676" y="321" width="1" height="1" fill="#666666"/><rect x="669" y="322" width="15" height="3" fill="#666666"/><rect x="670" y="323" width="13" height="1" fill="#b80000"/><rect x="686" y="321" width="15" height="4" fill="#666666"/><rect x="687" y="322" width="13" height="2" fill="#00b000"/><rect x="710" y="320" width="1" height="1" fill="#666666"/><rect x="710" y="322" width="1" height="2" fill="#666666"/><rect x="703" y="321" width="15" height="1" fill="#666666"/><rect x="727" y="319" width="1" height="2" fill="#666666"/><rect x="720" y="321" width="15" height="1" fill="#666666"/><rect x="744" y="194" width="1" height="127" fill="#666666"/><rect x="744" y="323" width="1" height="127" fill="#666666"/><rect x="737" y="321" width="15" height="2" fill="#666666"/><rect x="761" y="319" width="1" height="1" fill="#666666"/><rect x="754" y="320" width="15" height="3" fill="#666666"/><rect x="755" y="321" width="13" height="1" fill="#00b000"/><rect x="771" y="320" width="15" height="4" fill="#666666"/><rect x="772" y="321" width="13" height="2" fill="#b80000"/><rect x="795" y="322" width="1" height="1" fill="#666666"/><rect x="788" y="323" width="15" height="2" fill="#666666"/><rect x="812" y="323" width="1" height="1" fill="#666666"/><rect x="805" y="324" width="15" height="1" fill="#666666"/><rect x="829" y="323" width="1" height="1" fill="#666666"/><rect x="829" y="325" width="1" height="3" fill="#666666"/><rect x="822" y="324" width="15" height="1" fill="#666666"/><rect x="839" y="324" width="15" height="2" fill="#666666"/><rect x="863" y="323" width="1" height="1" fill="#666666"/><rect x="856" y="324" width="15" height="2" fill="#666666"/><rect x="880" y="325" width="1" height="2" fill="#666666"/><rect x="873" y="324" width="15" height="1" fill="#666666"/><rect x="890" y="324" width="15" height="2" fill="#666666"/><rect x="907" y="322" width="15" height="4" fill="#666666"/><rect x="908" y="323" width="13" height="2" fill="#00b000"/><rect x="931" y="321" width="1" height="1" fill="#666666"/><rect x="924" y="322" width="15" height="1" fill="#666666"/><rect x="948" y="323" width="1" height="2" fill="#666666"/><rect x="941" y="322" width="15" height="1" fill="#666666"/><rect x="958" y="322" width="15" height="2" fill="#666666"/><rect x="982" y="324" width="1" height="2" fill="#666666"/><rect x="975" y="323" width="15" height="1" fill="#666666"/><rect x="992" y="323" width="15" height="2" fill="#666666"/><rect x="1009" y="323" width="15" height="2" fill="#666666"/><rect x="1033" y="320" width="1" height="2" fill="#666666"/><rect x="1026" y="322" width="15" height="2" fill="#666666"/><rect x="1043" y="321" width="15" height="2" fill="#666666"/><rect x="1060" y="321" width="15" height="2" fill="#666666"/><rect x="1084" y="321" width="1" height="1" fill="#666666"/><rect x="1077" y="322" width="15" height="1" fill="#666666"/><rect x="1101" y="323" width="1" height="2" fill="#666666"/><rect x="1094" y="322" width="15" height="1" fill="#666666"/><rect x="1111" y="322" width="15" height="2" fill="#666666"/><rect x="1128" y="322" width="15" height="2" fill="#666666"/><rect x="1152" y="321" width="1" height="1" fill="#666666"/><rect x="1145" y="322" width="15" height="2" fill="#666666"/><rect x="1169" y="322" width="1" height="1" fill="#666666"/><rect x="1169" y="324" width="1" height="2" fill="#666666"/><rect x="1162" y="323" width="15" height="1" fill="#666666"/><rect x="1179" y="323" width="14" height="2" fill="#666666"/></svg>
<div class="t" style="left:9px;top:73px;font-size:10px;color:#999999;letter-spacing:0.35px"><span>mi SP 500 (Candlestick)</span></div>
<div style="left:9px;top:65px;width:1194px;height:1px;background:#a8bdc8;"></div>
<div style="left:32px;top:52px;width:1px;height:13px;background:#a8bdc8;"></div>
<div style="left:83px;top:52px;width:1px;height:13px;background:#a8bdc8;"></div>
<div style="left:134px;top:52px;width:1px;height:13px;background:#a8bdc8;"></div>
<div style="left:185px;top:52px;width:1px;height:13px;background:#a8bdc8;"></div>
<div style="left:236px;top:52px;width:1px;height:13px;background:#a8bdc8;"></div>
<div style="left:287px;top:52px;width:1px;height:13px;background:#a8bdc8;"></div>
<div style="left:338px;top:52px;width:1px;height:13px;background:#a8bdc8;"></div>
<div style="left:389px;top:52px;width:1px;height:13px;background:#a8bdc8;"></div>
<div style="left:440px;top:52px;width:1px;height:13px;background:#a8bdc8;"></div>
<div style="left:491px;top:52px;width:1px;height:13px;background:#a8bdc8;"></div>
<div style="left:542px;top:52px;width:1px;height:13px;background:#a8bdc8;"></div>
<div style="left:593px;top:52px;width:1px;height:13px;background:#a8bdc8;"></div>
<div style="left:644px;top:52px;width:1px;height:13px;background:#a8bdc8;"></div>
<div style="left:695px;top:52px;width:1px;height:13px;background:#a8bdc8;"></div>
<div style="left:746px;top:52px;width:1px;height:13px;background:#a8bdc8;"></div>
<div style="left:797px;top:52px;width:1px;height:13px;background:#a8bdc8;"></div>
<div style="left:848px;top:52px;width:1px;height:13px;background:#a8bdc8;"></div>
<div style="left:899px;top:52px;width:1px;height:13px;background:#a8bdc8;"></div>
<div style="left:950px;top:52px;width:1px;height:13px;background:#a8bdc8;"></div>
<div style="left:1001px;top:52px;width:1px;height:13px;background:#a8bdc8;"></div>
<div style="left:1052px;top:52px;width:1px;height:13px;background:#a8bdc8;"></div>
<div style="left:1103px;top:52px;width:1px;height:13px;background:#a8bdc8;"></div>
<div style="left:1154px;top:52px;width:1px;height:13px;background:#a8bdc8;"></div>
<div style="left:9px;top:52px;width:1194px;height:13px;overflow:hidden;">
<div class="t" style="left:-25px;top:8px;font-size:10px;letter-spacing:0.4px;"><span>15:18</span></div>
<div class="t" style="left:26px;top:8px;font-size:10px;letter-spacing:0.4px;"><span>15:21</span></div>
<div class="t" style="left:77px;top:8px;font-size:10px;letter-spacing:0.4px;"><span>15:24</span></div>
<div class="t" style="left:128px;top:8px;font-size:10px;letter-spacing:0.4px;"><span>15:27</span></div>
<div class="t" style="left:179px;top:8px;font-size:10px;letter-spacing:0.4px;"><span>15:30</span></div>
<div class="t" style="left:230px;top:8px;font-size:10px;letter-spacing:0.4px;"><span>15:33</span></div>
<div class="t" style="left:281px;top:8px;font-size:10px;letter-spacing:0.4px;"><span>15:36</span></div>
<div class="t" style="left:332px;top:8px;font-size:10px;letter-spacing:0.4px;"><span>15:39</span></div>
<div class="t" style="left:383px;top:8px;font-size:10px;letter-spacing:0.4px;"><span>15:42</span></div>
<div class="t" style="left:434px;top:8px;font-size:10px;letter-spacing:0.4px;"><span>15:45</span></div>
<div class="t" style="left:485px;top:8px;font-size:10px;letter-spacing:0.4px;"><span>15:48</span></div>
<div class="t" style="left:536px;top:8px;font-size:10px;letter-spacing:0.4px;"><span>15:51</span></div>
<div class="t" style="left:587px;top:8px;font-size:10px;letter-spacing:0.4px;"><span>15:54</span></div>
<div class="t" style="left:638px;top:8px;font-size:10px;letter-spacing:0.4px;"><span>15:57</span></div>
<div class="t" style="left:689px;top:8px;font-size:10px;letter-spacing:0.4px;"><span>16:00</span></div>
<div class="t" style="left:740px;top:8px;font-size:10px;letter-spacing:0.4px;"><span>16:03</span></div>
<div class="t" style="left:791px;top:8px;font-size:10px;letter-spacing:0.4px;"><span>16:06</span></div>
<div class="t" style="left:842px;top:8px;font-size:10px;letter-spacing:0.4px;"><span>16:09</span></div>
<div class="t" style="left:893px;top:8px;font-size:10px;letter-spacing:0.4px;"><span>16:12</span></div>
<div class="t" style="left:944px;top:8px;font-size:10px;letter-spacing:0.4px;"><span>16:15</span></div>
<div class="t" style="left:995px;top:8px;font-size:10px;letter-spacing:0.4px;"><span>16:18</span></div>
<div class="t" style="left:1046px;top:8px;font-size:10px;letter-spacing:0.4px;"><span>16:21</span></div>
<div class="t" style="left:1097px;top:8px;font-size:10px;letter-spacing:0.4px;"><span>16:24</span></div>
<div class="t" style="left:1148px;top:8px;font-size:10px;letter-spacing:0.4px;"><span>16:27</span></div>
</div>
<div style="left:1203px;top:66px;width:48px;height:646px;overflow:hidden;">
<div class="t" style="left:0;width:49.7px;text-align:center;top:3px;font-size:10px;letter-spacing:0.7px;"><span>1512.</span></div>
<div class="t" style="left:0;width:49.7px;text-align:center;top:55px;font-size:10px;letter-spacing:0.7px;"><span>1462.</span></div>
<div class="t" style="left:0;width:49.7px;text-align:center;top:106px;font-size:10px;letter-spacing:0.7px;"><span>1412.</span></div>
<div class="t" style="left:0;width:49.7px;text-align:center;top:157px;font-size:10px;letter-spacing:0.7px;"><span>1362.</span></div>
<div class="t" style="left:0;width:49.7px;text-align:center;top:208px;font-size:10px;letter-spacing:0.7px;"><span>1312.</span></div>
<div class="t" style="left:0;width:49.7px;text-align:center;top:259px;font-size:10px;letter-spacing:0.7px;"><span>1262.</span></div>
<div class="t" style="left:0;width:49.7px;text-align:center;top:311px;font-size:10px;letter-spacing:0.7px;"><span>1212.</span></div>
<div class="t" style="left:0;width:49.7px;text-align:center;top:362px;font-size:10px;letter-spacing:0.7px;"><span>1162.</span></div>
<div class="t" style="left:0;width:49.7px;text-align:center;top:413px;font-size:10px;letter-spacing:0.7px;"><span>1112.</span></div>
<div class="t" style="left:0;width:49.7px;text-align:center;top:464px;font-size:10px;letter-spacing:0.7px;"><span>1062.</span></div>
<div class="t" style="left:0;width:49.7px;text-align:center;top:515px;font-size:10px;letter-spacing:0.7px;"><span>1012.</span></div>
<div class="t" style="left:0;width:49.7px;text-align:center;top:567px;font-size:10px;letter-spacing:0.7px;"><span>962.</span></div>
<div class="t" style="left:0;width:49.7px;text-align:center;top:618px;font-size:10px;letter-spacing:0.7px;"><span>912.</span></div>
</div>
<div style="left:1255px;top:51px;width:17px;height:662px;background:#efefef;border:1px solid #6a7186;box-sizing:border-box;"></div>
<div style="left:1255px;top:51px;width:17px;height:17px;background:#a8bec6;border:1px solid #6a7186;box-sizing:border-box;"></div>
<svg style="position:absolute;left:1260px;top:57px;" width="7" height="4" viewBox="0 0 7 4" shape-rendering="crispEdges"><rect x="3" y="0" width="1" height="1" fill="#1f5a6e"/><rect x="2" y="1" width="3" height="1" fill="#1f5a6e"/><rect x="1" y="2" width="5" height="1" fill="#1f5a6e"/><rect x="0" y="3" width="7" height="1" fill="#1f5a6e"/></svg>
<div style="left:1255px;top:321px;width:17px;height:34px;background:#a8bec6;border:1px solid #6a7186;box-sizing:border-box;"></div>
<svg style="position:absolute;left:1259px;top:336px;" width="9" height="5" viewBox="0 0 9 5" shape-rendering="crispEdges"><rect x="1" y="0" width="7" height="1" fill="#6a7186"/><rect x="1" y="2" width="7" height="1" fill="#6a7186"/><rect x="1" y="4" width="7" height="1" fill="#6a7186"/></svg>
<div style="left:1255px;top:609px;width:17px;height:17px;background:#a8bec6;border:1px solid #6a7186;box-sizing:border-box;"></div>
<svg style="position:absolute;left:1260px;top:616px;" width="7" height="4" viewBox="0 0 7 4" shape-rendering="crispEdges"><rect x="0" y="0" width="7" height="1" fill="#1f5a6e"/><rect x="1" y="1" width="5" height="1" fill="#1f5a6e"/><rect x="2" y="2" width="3" height="1" fill="#1f5a6e"/><rect x="3" y="3" width="1" height="1" fill="#1f5a6e"/></svg>
<div style="left:1255px;top:626px;width:17px;height:3px;background:#dfdfdf;"></div>
<div style="left:1255px;top:629px;width:17px;height:17px;background:#a8bec6;border:1px solid #6a7186;box-sizing:border-box;"></div>
<svg style="position:absolute;left:1255px;top:629px;" width="17" height="17" viewBox="0 0 17 17" shape-rendering="crispEdges"><rect x="5" y="7" width="6" height="2" fill="#1f5a6e"/><rect x="7" y="5" width="2" height="6" fill="#1f5a6e"/></svg>
<div style="left:1255px;top:645px;width:17px;height:12px;background:#a8bec6;border:1px solid #6a7186;box-sizing:border-box;"></div>
<div style="left:1255px;top:696px;width:17px;height:17px;background:#a8bec6;border:1px solid #6a7186;box-sizing:border-box;"></div>
<svg style="position:absolute;left:1255px;top:696px;" width="17" height="17" viewBox="0 0 17 17" shape-rendering="crispEdges"><rect x="5" y="8" width="6" height="2" fill="#1f5a6e"/></svg>
<div style="left:8px;top:716px;width:84px;height:17px;background:#fff;border:1px solid #6a7186;box-sizing:border-box;"></div>
<div style="left:75px;top:716px;width:17px;height:17px;background:#a8bec6;border:1px solid #6a7186;box-sizing:border-box;"></div>
<svg style="position:absolute;left:80px;top:723px;" width="7" height="4" viewBox="0 0 7 4" shape-rendering="crispEdges"><rect x="0" y="0" width="7" height="1" fill="#1f5a6e"/><rect x="1" y="1" width="5" height="1" fill="#1f5a6e"/><rect x="2" y="2" width="3" height="1" fill="#1f5a6e"/><rect x="3" y="3" width="1" height="1" fill="#1f5a6e"/></svg>
<div style="left:9px;top:717px;width:66px;height:15px;overflow:hidden;">
<div class="t" style="left:4px;top:9px;font-size:10px;letter-spacing:0.25px"><span>Analysetool</span></div></div>
<div style="left:95px;top:716px;width:63px;height:17px;background:#a8bec6;border:1px solid #6a7186;box-sizing:border-box;"></div>
<div class="t" style="left:110px;top:726px;font-size:10px;color:#000;letter-spacing:0.1px"><span>Kaufen</span></div>
<div style="left:161px;top:716px;width:63px;height:17px;background:#a8bec6;border:1px solid #6a7186;box-sizing:border-box;"></div>
<div class="t" style="left:169px;top:726px;font-size:10px;color:#000;letter-spacing:0.1px"><span>Verkaufen</span></div>
<div style="left:227px;top:716px;width:67px;height:17px;background:#a8bec6;border:1px solid #6a7186;box-sizing:border-box;"></div>
<div class="t" style="left:236px;top:726px;font-size:10px;color:#000;letter-spacing:0.1px"><span>Box setzen</span></div>
<div style="left:297px;top:716px;width:868px;height:17px;background:#efefef;border:1px solid #6a7186;box-sizing:border-box;"></div>
<div style="left:297px;top:716px;width:17px;height:17px;background:#a8bec6;border:1px solid #6a7186;box-sizing:border-box;"></div>
<svg style="position:absolute;left:303px;top:721px;" width="4" height="7" viewBox="0 0 4 7" shape-rendering="crispEdges"><rect x="3" y="0" width="1" height="7" fill="#1f5a6e"/><rect x="2" y="1" width="1" height="5" fill="#1f5a6e"/><rect x="1" y="2" width="1" height="3" fill="#1f5a6e"/><rect x="0" y="3" width="1" height="1" fill="#1f5a6e"/></svg>
<div style="left:954px;top:716px;width:63px;height:17px;background:#efffff;border:1px solid #6a7186;box-sizing:border-box;"></div>
<div style="left:983px;top:721px;width:1px;height:8px;background:#6a7186;"></div>
<div style="left:985px;top:721px;width:1px;height:8px;background:#6a7186;"></div>
<div style="left:987px;top:721px;width:1px;height:8px;background:#6a7186;"></div>
<div style="left:1148px;top:716px;width:17px;height:17px;background:#a8bec6;border:1px solid #6a7186;box-sizing:border-box;"></div>
<svg style="position:absolute;left:1155px;top:721px;" width="4" height="7" viewBox="0 0 4 7" shape-rendering="crispEdges"><rect x="0" y="0" width="1" height="7" fill="#1f5a6e"/><rect x="1" y="1" width="1" height="5" fill="#1f5a6e"/><rect x="2" y="2" width="1" height="3" fill="#1f5a6e"/><rect x="3" y="3" width="1" height="1" fill="#1f5a6e"/></svg>
<div style="left:1168px;top:716px;width:84px;height:17px;background:#efefef;border:1px solid #6a7186;box-sizing:border-box;"></div>
<div style="left:1168px;top:716px;width:17px;height:17px;background:#a8bec6;border:1px solid #6a7186;box-sizing:border-box;"></div>
<svg style="position:absolute;left:1168px;top:716px;" width="17" height="17" viewBox="0 0 17 17" shape-rendering="crispEdges"><rect x="5" y="7" width="6" height="2" fill="#1f5a6e"/></svg>
<div style="left:1207px;top:716px;width:11px;height:17px;background:#a8bec6;border:1px solid #6a7186;box-sizing:border-box;"></div>
<div style="left:1235px;top:716px;width:17px;height:17px;background:#a8bec6;border:1px solid #6a7186;box-sizing:border-box;"></div>
<svg style="position:absolute;left:1235px;top:716px;" width="17" height="17" viewBox="0 0 17 17" shape-rendering="crispEdges"><rect x="5" y="7" width="6" height="2" fill="#1f5a6e"/><rect x="7" y="5" width="2" height="6" fill="#1f5a6e"/></svg>
<div style="left:1255px;top:716px;width:17px;height:17px;background:#a8bec6;border:1px solid #6a7186;box-sizing:border-box;"></div>
<div class="t" style="left:1261px;top:726px;font-size:10px;color:#000;"><span>R</span></div>
<div style="left:0px;top:742px;width:1280px;height:2px;background:#fbfaf5;"></div>
<div style="left:0px;top:744px;width:1279px;height:1px;background:#a3a08f;"></div>
<div style="left:0px;top:745px;width:1279px;height:1px;background:#75725f;"></div>
<div style="left:0px;top:746px;width:1279px;height:21px;background:#ece9d8;"></div>
<div style="left:0px;top:767px;width:1280px;height:1px;background:#ffffff;"></div>
<div style="left:1279px;top:744px;width:1px;height:24px;background:#ffffff;"></div>
<div style="left:0px;top:744px;width:1px;height:23px;background:#a3a08f;"></div>
<div style="left:1px;top:745px;width:1px;height:22px;background:#8f8c80;"></div>
<div class="t" style="left:5px;top:757px;font-size:13.5px;color:#000;"><span>Java Applet Window</span></div>
</body></html>
